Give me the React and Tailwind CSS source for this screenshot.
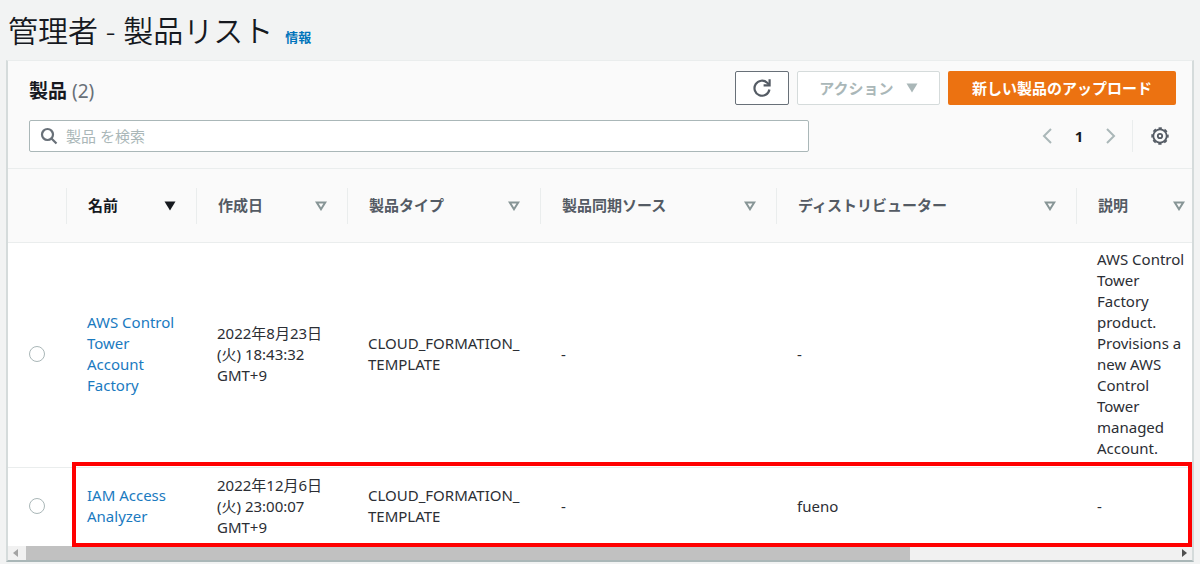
import { useState } from "react";

const columns = [
  { key: "name", label: "名前", width: "w-[130px]" },
  { key: "created", label: "作成日", width: "w-[151px]" },
  { key: "type", label: "製品タイプ", width: "w-[193px]" },
  { key: "source", label: "製品同期ソース", width: "w-[236px]" },
  { key: "distributor", label: "ディストリビューター", width: "w-[300px]" },
  { key: "description", label: "説明", width: "" },
];

const products = [
  {
    id: "prod-1",
    name: "AWS Control Tower Account Factory",
    created: ["2022年8月23日", "(火) 18:43:32", "GMT+9"],
    source: "-",
    distributor: "-",
    description: "AWS Control Tower Factory product. Provisions a new AWS Control Tower managed Account.",
  },
  {
    id: "prod-2",
    name: "IAM Access Analyzer",
    created: ["2022年12月6日", "(火) 23:00:07", "GMT+9"],
    source: "-",
    distributor: "fueno",
    description: "-",
  },
];

function SortIcon({ active }) {
  return (
    <svg viewBox="0 0 12 10" className={active ? "w-3 h-[10px] shrink-0 text-[#16191f]" : "w-3 h-[10px] shrink-0 text-[#879596]"}>
      {active ? (
        <path d="M0.5 0.5h11L6 9.5z" fill="currentColor" />
      ) : (
        <path d="M1.8 1.5h8.4L6 8.2z" fill="none" stroke="currentColor" strokeWidth="2" />
      )}
    </svg>
  );
}

function RefreshIcon() {
  return (
    <svg viewBox="0 0 20 20" className="w-5 h-5" fill="none" stroke="currentColor" strokeWidth="2.2">
      <path d="M17.4 11.5A7.5 7.5 0 1 1 15.2 4.8L17 6.5" />
      <path d="M17.6 1.2v6.2h-6" />
    </svg>
  );
}

function GearIcon() {
  return (
    <svg viewBox="0 0 18 18" className="w-[18px] h-[18px]" fill="none" stroke="currentColor">
      <circle cx="9" cy="9" r="6.7" strokeWidth="1.8" />
      <circle cx="9" cy="9" r="7.9" strokeWidth="1.6" strokeDasharray="3.4 2.8" strokeDashoffset="1.7" />
      <circle cx="9" cy="9" r="2.2" strokeWidth="1.8" />
    </svg>
  );
}

export default function App() {
  const [query, setQuery] = useState("");
  const [selected, setSelected] = useState(null);

  return (
    <div className="min-h-screen bg-[#f2f3f3] px-[6px] text-[15px] leading-[22px] text-[#16191f] font-['Noto_Sans','Noto_Sans_CJK_JP',sans-serif]">
      <header className="flex items-baseline gap-3 h-[60px] pt-[9px] pl-[2px]">
        <h1 className="text-[30px] leading-[44px] font-[350]">管理者 - 製品リスト</h1>
        <a href="#info" className="text-[13px] font-bold text-[#0073bb]">情報</a>
      </header>

      <main className="border-x-2 border-t border-b-2 border-x-[#d5dbdb] border-t-[#eaeded] border-b-[#aab7b8] bg-white">
        <div className="bg-[#fafafa] border-b border-[#eaeded] pt-[10px] pb-4 pl-[21px] pr-4">
          <div className="flex items-center justify-between">
            <h2 className="text-[19px] leading-6 font-bold pt-[6px]">
              製品 <span className="font-normal text-[#687078]">(2)</span>
            </h2>
            <div className="flex gap-2">
              <button aria-label="更新" className="flex items-center justify-center w-[54px] h-[34px] border border-[#687078] rounded-xs bg-white text-[#545b64]">
                <RefreshIcon />
              </button>
              <button disabled className="flex items-center justify-center gap-3 w-[143px] h-[34px] border border-[#d5dbdb] rounded-xs bg-white text-[#aab7b8] font-bold">
                アクション
                <svg viewBox="0 0 12 10" className="w-3 h-[10px]"><path d="M0.5 0.5h11L6 9.5z" fill="currentColor" /></svg>
              </button>
              <button className="h-[34px] px-6 rounded-xs bg-[#ec7211] text-white font-bold">新しい製品のアップロード</button>
            </div>
          </div>

          <div className="flex items-center justify-between mt-[15px]">
            <label className="flex items-center gap-2 w-[68%] h-8 pl-[10px] border border-[#aab7b8] rounded-xs bg-white">
              <svg viewBox="0 0 18 18" className="w-[18px] h-[18px] text-[#687078]" fill="none" stroke="currentColor" strokeWidth="2.2">
                <circle cx="7.5" cy="7.5" r="5.5" />
                <path d="M11.5 11.5l5 5" />
              </svg>
              <input
                type="text"
                aria-label="製品 を検索"
                placeholder="製品 を検索"
                value={query}
                onChange={e => setQuery(e.target.value)}
                className="flex-1 outline-none placeholder:text-[#aab7b8]"
              />
            </label>
            <div className="flex items-center h-8">
              <button aria-label="前のページ" className="text-[#aab7b8]">
                <svg viewBox="0 0 10 16" className="w-[10px] h-4" fill="none" stroke="currentColor" strokeWidth="2"><path d="M9 1L2 8l7 7" /></svg>
              </button>
              <button className="w-[54px] text-[15px] font-bold">1</button>
              <button aria-label="次のページ" className="text-[#aab7b8]">
                <svg viewBox="0 0 10 16" className="w-[10px] h-4" fill="none" stroke="currentColor" strokeWidth="2"><path d="M1 1l7 7-7 7" /></svg>
              </button>
              <div className="ml-4 h-8 border-l border-[#eaeded]" />
              <button aria-label="設定" className="pl-[18px] pr-[7px] text-[#545b64]">
                <GearIcon />
              </button>
            </div>
          </div>
        </div>

        <div className="relative overflow-x-clip">
          <table className="w-full table-fixed border-separate border-spacing-0 text-left leading-[21px]">
            <thead className="bg-[#fafafa] text-[#545b64]">
              <tr>
                <th className="w-[58px] h-[74px] border-b border-[#eaeded]" />
                {columns.map((col, i) => (
                  <th key={col.key} className={`${col.width} p-0 border-b border-[#eaeded]`}>
                    <div
                      className={`flex items-center justify-between h-9 pl-[21px] border-l border-[#eaeded] ${
                        i === 0 ? "text-[#16191f]" : ""
                      } ${col.key === "description" ? "pr-[7px]" : "pr-5"}`}
                    >
                      {col.label}
                      <SortIcon active={i === 0} />
                    </div>
                  </th>
                ))}
              </tr>
            </thead>
            <tbody className="text-[#2b2e34]">
              {products.map((p, i) => {
                const cell = `pl-[21px] pr-1 pb-[2px] ${i === 0 ? "h-[225px] border-b border-[#eaeded]" : "h-[78px]"}`;
                return (
                  <tr key={p.id}>
                    <td className={cell}>
                      <input
                        type="radio"
                        name="product"
                        aria-label={p.name}
                        checked={selected === p.id}
                        onChange={() => setSelected(p.id)}
                        className="block appearance-none w-4 h-4 rounded-full border border-[#aab7b8] checked:border-[5px] checked:border-[#0073bb]"
                      />
                    </td>
                    <td className={cell}>
                      <a href={`#${p.id}`} className="block pr-4 text-[#1a7abf]">{p.name}</a>
                    </td>
                    <td className={cell}>
                      {p.created.map(line => <div key={line}>{line}</div>)}
                    </td>
                    <td className={cell}>CLOUD_FORMATION_<br />TEMPLATE</td>
                    <td className={cell}>{p.source}</td>
                    <td className={cell}>{p.distributor}</td>
                    <td className={cell}>{p.description}</td>
                  </tr>
                );
              })}
            </tbody>
          </table>
          <div className="absolute left-[64px] right-0 bottom-[-1px] h-[85px] border-4 border-[#ff0000] pointer-events-none" />
        </div>

        <div className="flex items-center h-[14px] px-[5px] bg-[#f1f1f1]">
          <svg viewBox="0 0 5 8" className="w-[5px] h-2 mr-2"><path d="M5 0v8L0 4z" fill="#a3a3a3" /></svg>
          <div className="flex-1 h-full">
            <div className="w-[77%] h-full bg-[#c1c1c1]" />
          </div>
          <svg viewBox="0 0 5 8" className="w-[5px] h-2 ml-2"><path d="M0 0v8l5-4z" fill="#505050" /></svg>
        </div>
      </main>
    </div>
  );
}
